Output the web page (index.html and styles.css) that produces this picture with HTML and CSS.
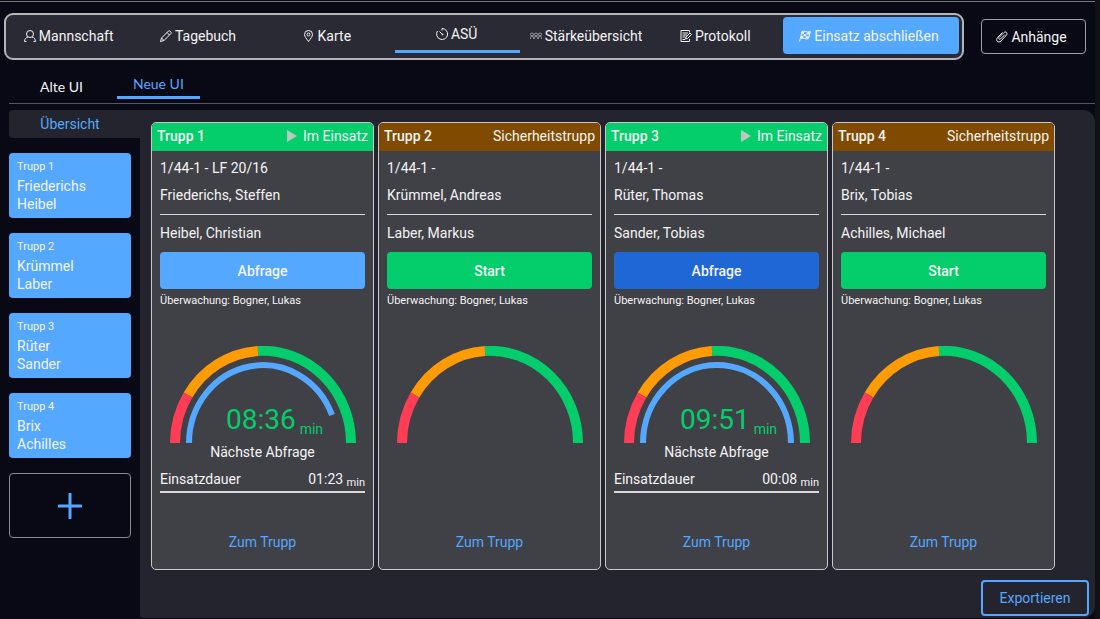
FILE: index.html
```html
<!DOCTYPE html>
<html lang="de">

<head>
    <meta charset="UTF-8">
    <meta name="viewport" content="width=device-width, initial-scale=1.0">
    <title>Atemschutzüberwachung</title>
    <link rel="stylesheet" href="styles.css">
</head>

<body>
    <div class="app">
        <header class="topbar">
            <nav class="mainnav">
                <a href="#mannschaft">
                    <svg class="icon" viewBox="0 0 24 24"><circle cx="12" cy="8" r="7"/><path d="M1 23c0-5 3-8 7-9M23 23c0-5-3-8-7-9M1 23h4M19 23h4"/></svg>
                    Mannschaft
                </a>
                <a href="#tagebuch">
                    <svg class="icon" viewBox="0 0 24 24"><path d="M1 23l2-7L17 2c2-2 7 3 5 5L8 21zM3 16l5 5M14 5l5 5"/></svg>
                    Tagebuch
                </a>
                <a href="#karte">
                    <svg class="icon pin" viewBox="0 0 18 24"><path d="M9 23C5 17 1 13 1 9a8 8 0 0 1 16 0c0 4-4 8-8 14z"/><circle cx="9" cy="9" r="3"/></svg>
                    Karte
                </a>
                <a href="#asue" class="active">
                    <svg class="icon" viewBox="0 0 24 24"><path d="M12 5V1a11 11 0 1 1-9 5M7 7l6 6"/><circle cx="13" cy="13" r="1"/></svg>
                    ASÜ
                </a>
                <a href="#staerke">
                    <svg class="icon people" viewBox="0 0 24 24"><circle cx="4" cy="9" r="3"/><circle cx="12" cy="9" r="3"/><circle cx="20" cy="9" r="3"/><path d="M1 18c0-4 1-6 3-6s3 2 4 6c1-4 2-6 4-6s3 2 4 6c1-4 2-6 4-6s3 2 3 6"/></svg>
                    Stärkeübersicht
                </a>
                <a href="#protokoll">
                    <svg class="icon" viewBox="0 0 24 24"><path d="M19 5V1H2v22h17v-5M5 6h11M5 10h9M5 14h6M5 19h5"/><path d="M11 18l1-4 8-8 3 3-8 8z"/></svg>
                    Protokoll
                </a>
                <button type="button" class="finish">
                    <svg class="icon" viewBox="0 0 24 24"><path d="M6 3L1 23M6 3c5-3 8 3 17 0l-4 14c-7 3-9-3-16 0"/><path class="fill" d="M6 4l5-1-1 5-5 1zM16 5l6-1-1 5-6 0zM10 8l5 1-1 4-5-1zM4 12l5 0-1 4-4 1zM14 13l6-1-2 5-5 0z"/></svg>
                    Einsatz abschließen
                </button>
            </nav>
            <button type="button" class="attachments">
                <svg class="icon" viewBox="0 0 24 24"><path d="M18 7l-9 9c-2 2-5-1-3-3L16 3c4-3 8 1 5 5L10 20c-5 5-12-1-7-7L13 3"/></svg>
                Anhänge
            </button>
        </header>

        <nav class="tabs">
            <a href="#alt">Alte UI</a>
            <a href="#neu" class="active">Neue UI</a>
        </nav>

        <div class="content">
            <aside class="sidebar">
                <a href="#uebersicht" class="overview">Übersicht</a>
                <a href="#trupp1" class="squad"><small>Trupp 1</small>Friederichs<br>Heibel</a>
                <a href="#trupp2" class="squad"><small>Trupp 2</small>Krümmel<br>Laber</a>
                <a href="#trupp3" class="squad"><small>Trupp 3</small>Rüter<br>Sander</a>
                <a href="#trupp4" class="squad"><small>Trupp 4</small>Brix<br>Achilles</a>
                <button type="button" class="add" aria-label="Trupp hinzufügen">
                    <svg viewBox="0 0 24 26"><path d="M12 1v24M1 13h22"/></svg>
                </button>
            </aside>

            <main class="panel">
                <div class="cards">
                    <article class="card">
                        <header class="running">
                            <h2>Trupp 1</h2>
                            <span><svg class="play" viewBox="0 0 10 12"><path d="M0 0l10 6-10 6z"/></svg>Im Einsatz</span>
                        </header>
                        <div class="body">
                            <p>1/44-1 - LF 20/16</p>
                            <p>Friederichs, Steffen</p>
                            <hr>
                            <p>Heibel, Christian</p>
                            <button type="button" class="action blue">Abfrage</button>
                            <p class="watch">Überwachung: Bogner, Lukas</p>
                            <div class="gauge">
                                <svg viewBox="0 0 186 97">
                                    <path class="green" d="M88 5A88 92 0 0 1 181 97"/>
                                    <path class="orange" d="M18 49A88 92 0 0 1 88 5"/>
                                    <path class="red" d="M5 97A88 92 0 0 1 18 49"/>
                                    <path class="rest" d="M19 97A74 78 0 0 1 162 69"/>
                                </svg>
                                <div class="time"><strong>08:36</strong> <span>min</span></div>
                            </div>
                            <h3>Nächste Abfrage</h3>
                            <div class="duration"><span>Einsatzdauer</span><span>01:23 <small>min</small></span></div>
                            <a href="#trupp1" class="more">Zum Trupp</a>
                        </div>
                    </article>

                    <article class="card">
                        <header class="standby">
                            <h2>Trupp 2</h2>
                            <span>Sicherheitstrupp</span>
                        </header>
                        <div class="body">
                            <p>1/44-1 -</p>
                            <p>Krümmel, Andreas</p>
                            <hr>
                            <p>Laber, Markus</p>
                            <button type="button" class="action start">Start</button>
                            <p class="watch">Überwachung: Bogner, Lukas</p>
                            <div class="gauge">
                                <svg viewBox="0 0 186 97">
                                    <path class="green" d="M88 5A88 92 0 0 1 181 97"/>
                                    <path class="orange" d="M18 49A88 92 0 0 1 88 5"/>
                                    <path class="red" d="M5 97A88 92 0 0 1 18 49"/>
                                </svg>
                            </div>
                            <a href="#trupp2" class="more">Zum Trupp</a>
                        </div>
                    </article>

                    <article class="card">
                        <header class="running">
                            <h2>Trupp 3</h2>
                            <span><svg class="play" viewBox="0 0 10 12"><path d="M0 0l10 6-10 6z"/></svg>Im Einsatz</span>
                        </header>
                        <div class="body">
                            <p>1/44-1 -</p>
                            <p>Rüter, Thomas</p>
                            <hr>
                            <p>Sander, Tobias</p>
                            <button type="button" class="action pressed">Abfrage</button>
                            <p class="watch">Überwachung: Bogner, Lukas</p>
                            <div class="gauge">
                                <svg viewBox="0 0 186 97">
                                    <path class="green" d="M88 5A88 92 0 0 1 181 97"/>
                                    <path class="orange" d="M18 49A88 92 0 0 1 88 5"/>
                                    <path class="red" d="M5 97A88 92 0 0 1 18 49"/>
                                    <path class="rest" d="M19 97A74 78 0 0 1 167 97"/>
                                </svg>
                                <div class="time"><strong>09:51</strong> <span>min</span></div>
                            </div>
                            <h3>Nächste Abfrage</h3>
                            <div class="duration"><span>Einsatzdauer</span><span>00:08 <small>min</small></span></div>
                            <a href="#trupp3" class="more">Zum Trupp</a>
                        </div>
                    </article>

                    <article class="card">
                        <header class="standby">
                            <h2>Trupp 4</h2>
                            <span>Sicherheitstrupp</span>
                        </header>
                        <div class="body">
                            <p>1/44-1 -</p>
                            <p>Brix, Tobias</p>
                            <hr>
                            <p>Achilles, Michael</p>
                            <button type="button" class="action start">Start</button>
                            <p class="watch">Überwachung: Bogner, Lukas</p>
                            <div class="gauge">
                                <svg viewBox="0 0 186 97">
                                    <path class="green" d="M88 5A88 92 0 0 1 181 97"/>
                                    <path class="orange" d="M18 49A88 92 0 0 1 88 5"/>
                                    <path class="red" d="M5 97A88 92 0 0 1 18 49"/>
                                </svg>
                            </div>
                            <a href="#trupp4" class="more">Zum Trupp</a>
                        </div>
                    </article>
                </div>
                <button type="button" class="export">Exportieren</button>
            </main>
        </div>
    </div>
</body>

</html>
```
FILE: styles.css
```css
* {
    box-sizing: border-box;
}

body {
    margin: 0;
    background: #111113;
    color: #f4f4f4;
    font: 14px/18px Roboto, "Liberation Sans", sans-serif;
}

a {
    color: inherit;
    text-decoration: none;
}

button {
    padding: 0;
    border: none;
    background: none;
    color: inherit;
    font: inherit;
    cursor: pointer;
}

h2,
h3,
p {
    margin: 0;
    font-size: 14px;
}

.app {
    min-height: 100vh;
    margin-right: 5px;
    padding-top: 1px;
    background: #090916;
}

/* Kopfzeile */
.topbar {
    display: flex;
    align-items: center;
    gap: 17px;
    padding: 11px 9px 0 4px;
    border-top: 1px solid #77777d;
}

.mainnav {
    flex: 1;
    display: flex;
    align-items: center;
    gap: 4px;
    height: 47px;
    padding: 0 3px 2px 1px;
    border: 2px solid #b4b4b8;
    border-radius: 9px;
    background: #2a2a35;
}

.mainnav a,
.finish,
.attachments {
    display: flex;
    align-items: center;
    justify-content: center;
    gap: 3px;
    padding-right: 4px;
    white-space: nowrap;
}

.mainnav a {
    flex: 1 0 0;
    height: 34px;
    padding-right: 2px;
}

.mainnav .active {
    border-bottom: 3px solid #54a8ff;
}

.finish {
    width: 176px;
    height: 37px;
    border-radius: 4px;
    background: #54a8ff;
}

.attachments {
    width: 105px;
    height: 35px;
    border: 1px solid #a0a0a4;
    border-radius: 4px;
}

.icon {
    width: 12px;
    height: 12px;
    fill: none;
    stroke: currentColor;
    stroke-width: 2;
}

.pin {
    width: 9px;
    margin-right: 2px;
}

.people {
    stroke-width: 1;
}

.icon .fill {
    fill: currentColor;
    stroke: none;
}

/* Reiter */
.tabs {
    display: flex;
    align-items: flex-start;
    gap: 18px;
    height: 44px;
    margin-left: 9px;
    padding: 12px 0 0 15px;
    border-bottom: 1px solid #55555c;
    font-family: Lato, Roboto, sans-serif;
}

.tabs a {
    padding: 0 16px;
    line-height: 30px;
}

.tabs .active {
    border-bottom: 3px solid #54a8ff;
    color: #54a8ff;
    line-height: 24px;
}

.content {
    display: flex;
    margin: 6px 0 0 9px;
}

/* Seitenleiste */
.sidebar {
    display: flex;
    flex-direction: column;
    gap: 15px;
    width: 131px;
    padding-right: 9px;
}

.overview {
    margin-right: -9px;
    padding-right: 9px;
    border-radius: 4px 0 0 4px;
    background: #24242e;
    color: #54a8ff;
    line-height: 28px;
    text-align: center;
}

.squad {
    padding: 6px 8px 5px;
    border-radius: 4px;
    background: #54a8ff;
}

.squad small {
    display: block;
    margin-bottom: 2px;
    font-size: 11px;
    line-height: 16px;
}

.add {
    display: flex;
    align-items: center;
    justify-content: center;
    height: 65px;
    border: 1px solid #8a8a8e;
    border-radius: 4px;
}

.add svg {
    width: 24px;
    height: 26px;
    fill: none;
    stroke: #54a8ff;
    stroke-width: 3;
    stroke-linecap: round;
}

/* Trupps */
.panel {
    flex: 1;
    display: flex;
    flex-direction: column;
    padding: 12px 6px 2px 11px;
    border-radius: 0 12px 12px 4px;
    background: #24242e;
}

.cards {
    display: grid;
    grid-template-columns: repeat(4, 1fr);
    gap: 4px;
    margin-right: 34px;
}

.card {
    display: flex;
    flex-direction: column;
    overflow: hidden;
    border: 1px solid #c8c8ca;
    border-radius: 5px;
    background: #404047;
}

.card header {
    display: flex;
    align-items: center;
    justify-content: space-between;
    height: 28px;
    padding: 0 5px 2px;
}

.card h2 {
    font-weight: 500;
}

.running {
    background: #04cd6b;
}

.standby {
    background: #804a00;
}

.play {
    width: 10px;
    height: 12px;
    margin-right: 6px;
    fill: #bdc5c0;
    vertical-align: -1px;
}

.body {
    flex: 1;
    display: flex;
    flex-direction: column;
    padding: 4px 8px 17px;
}

.body p {
    line-height: 27px;
}

.body hr {
    width: 100%;
    margin: 5px 0;
    border: none;
    border-top: 1px solid #d8d8da;
}

.action {
    height: 37px;
    margin-top: 5px;
    border-radius: 4px;
    font-weight: 500;
}

.blue {
    background: #54a8ff;
}

.start {
    background: #04cd6b;
}

.pressed {
    background: #1f67d5;
}

.body .watch {
    font-size: 11px;
    line-height: 23px;
}

/* Halbkreis mit Restzeit */
.gauge {
    display: grid;
    justify-items: center;
    align-items: end;
    margin-top: 34px;
}

.gauge > * {
    grid-area: 1 / 1;
}

.gauge svg {
    display: block;
    width: 100%;
    max-width: 186px;
    fill: none;
    stroke-width: 10;
}

.red {
    stroke: #ff3d55;
}

.orange {
    stroke: #ff9b05;
}

.green {
    stroke: #04cd6b;
}

.rest {
    stroke: #54a8ff;
    stroke-width: 6;
}

.time {
    display: flex;
    align-items: flex-end;
    gap: 4px;
    padding: 0 0 7px 24px;
    color: #04cd6b;
    line-height: 14px;
}

.time strong {
    font-size: 28px;
    font-weight: 400;
    line-height: 32px;
}

.body h3 {
    font-weight: 400;
    text-align: center;
}

.duration {
    display: flex;
    justify-content: space-between;
    padding: 9px 0 3px;
    border-bottom: 2px solid #d8d8da;
}

.duration small {
    font-size: 11px;
    line-height: 11px;
    vertical-align: -2px;
}

.more {
    margin-top: auto;
    padding-top: 39px;
    color: #54a8ff;
    line-height: 20px;
    text-align: center;
}

.export {
    align-self: flex-end;
    width: 108px;
    height: 36px;
    margin-top: 10px;
    border: 2px solid #54a8ff;
    border-radius: 4px;
    color: #54a8ff;
}
```
